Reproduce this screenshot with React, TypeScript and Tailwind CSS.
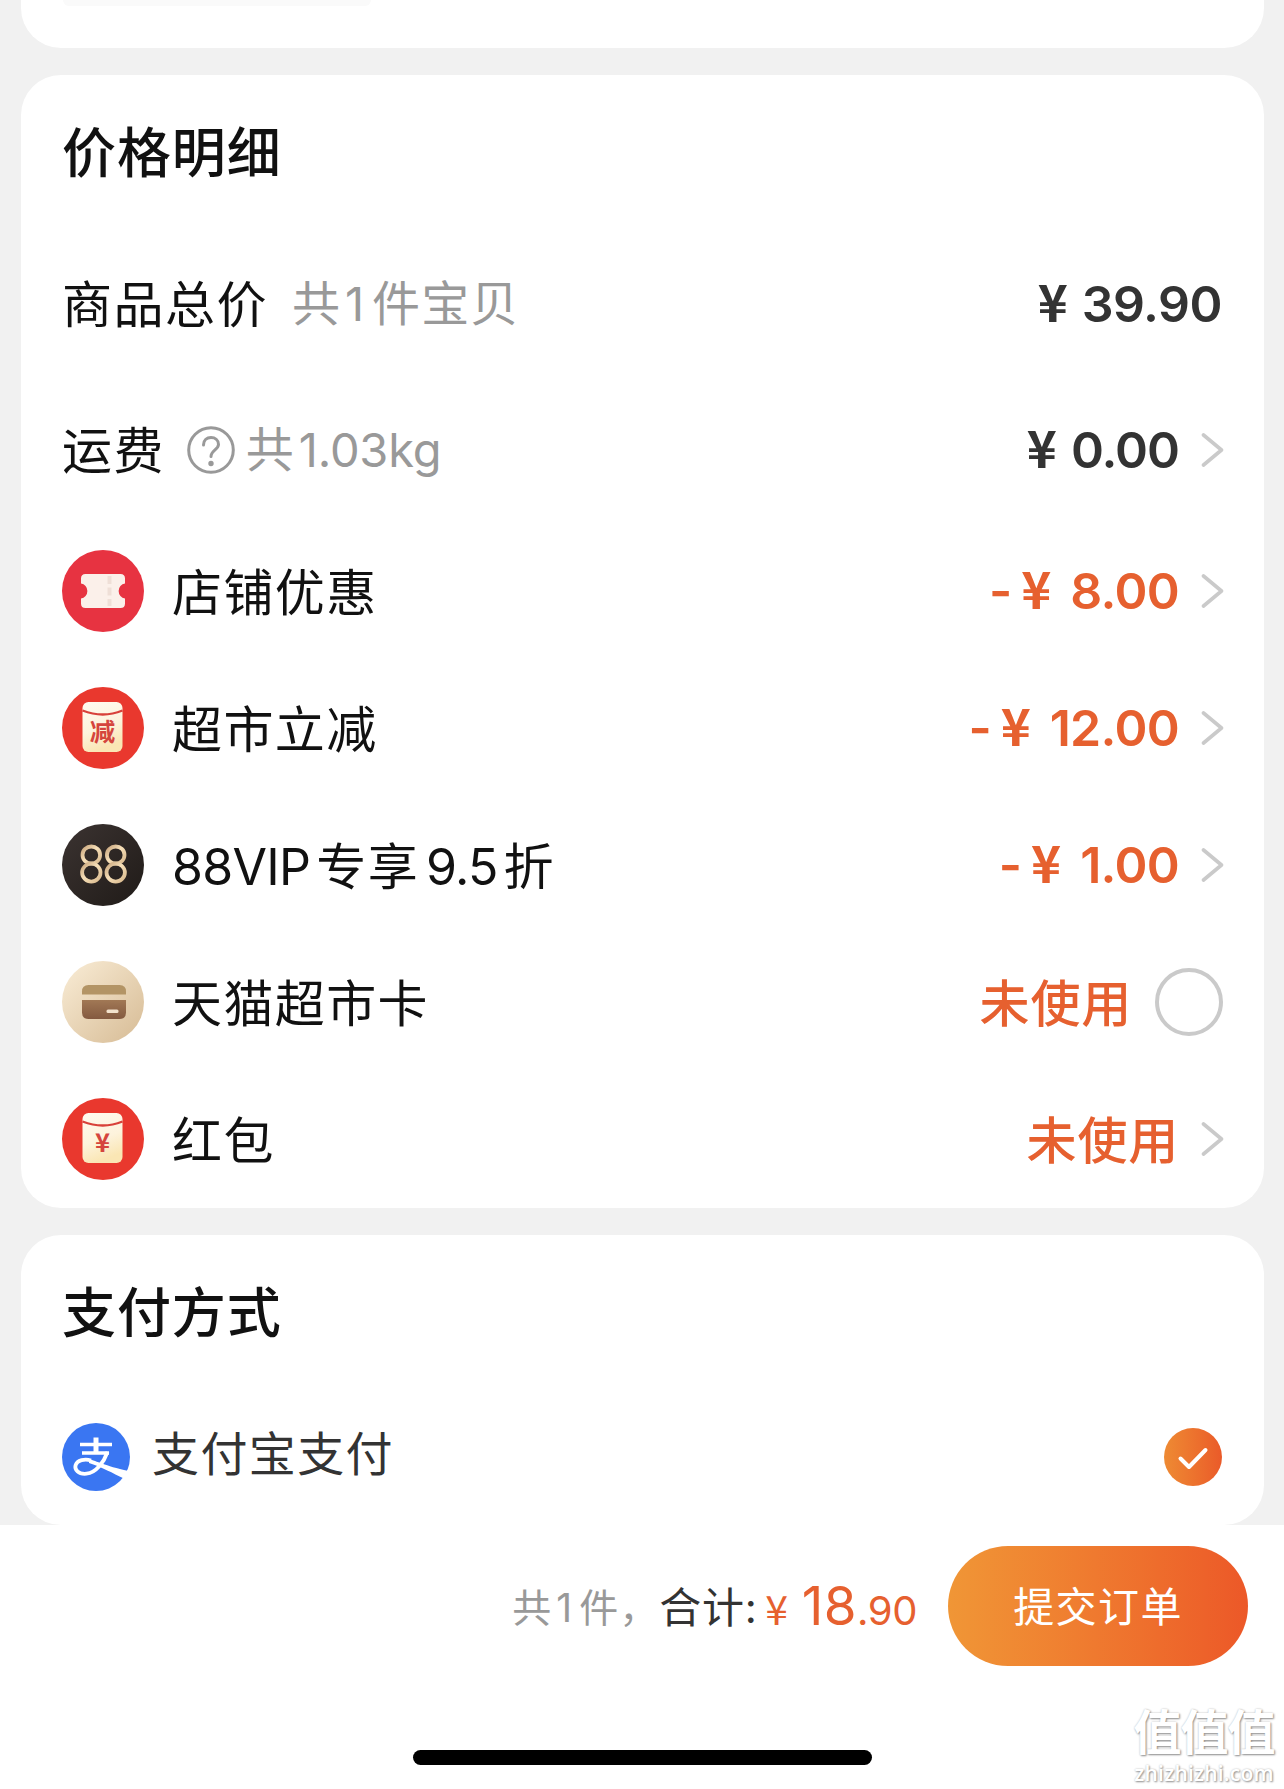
import type { ReactNode } from "react";

function Chevron() {
  return (
    <svg className="-mr-px ml-[21px] h-[40px] w-[24px] shrink-0" viewBox="0 0 24 40" fill="none" stroke="#cacaca" strokeWidth="3.6" strokeLinecap="round" strokeLinejoin="round">
      <path d="M3.500 5 21.500 20 3.500 35" />
    </svg>
  );
}

function Envelope({ mark, id }: { mark: string; id: string }) {
  return (
    <svg className="size-[82px]" viewBox="0 0 82 82">
      <defs>
        <linearGradient id={id} x1="0" y1="0" x2="0.3" y2="1">
          <stop offset="0" stopColor="#fffaf0" />
          <stop offset="0.6" stopColor="#fdf3dc" />
          <stop offset="1" stopColor="#fae6b4" />
        </linearGradient>
      </defs>
      <circle cx="41" cy="41" r="41" fill="#e9382e" />
      <rect x="20.500" y="15" width="40" height="50" rx="6" fill={`url(#${id})`} />
      <path d="M20.500 23.500Q41 31.500 60.500 23.500" fill="none" stroke="#d8413a" strokeWidth="2.400" />
      <text x="40.500" y="54" textAnchor="middle" fontSize="25.500" fontWeight="700" fill="#d5453d" fontFamily="'Noto Sans CJK SC', sans-serif">
        {mark}
      </text>
    </svg>
  );
}

function CouponIcon() {
  return (
    <svg className="size-[82px]" viewBox="0 0 82 82">
      <circle cx="41" cy="41" r="41" fill="#e73341" />
      <path
        d="M23.500 24H58.500Q63 24 63 28.500V33.500A7.600 7.600 0 0 0 63 48.500V53.500Q63 58 58.500 58H23.500Q19 58 19 53.500V48.500A7.600 7.600 0 0 0 19 33.500V28.500Q19 24 23.500 24Z"
        fill="#fbf0ea"
      />
      <path d="M47.500 26V56" stroke="#efdfd7" strokeWidth="4" strokeDasharray="8 3.500" />
    </svg>
  );
}

function VipIcon() {
  return (
    <svg className="size-[82px]" viewBox="0 0 82 82">
      <defs>
        <linearGradient id="vip-bg" x1="0" y1="0" x2="1" y2="1">
          <stop offset="0" stopColor="#3b3331" />
          <stop offset="1" stopColor="#201b18" />
        </linearGradient>
        <linearGradient id="vip-gold" x1="0" y1="0" x2="1" y2="1">
          <stop offset="0" stopColor="#c8a57c" />
          <stop offset="0.45" stopColor="#f6dfb8" />
          <stop offset="1" stopColor="#d8b88c" />
        </linearGradient>
      </defs>
      <circle cx="41" cy="41" r="41" fill="url(#vip-bg)" />
      <g fill="none" stroke="url(#vip-gold)" strokeWidth="3.800">
        <ellipse cx="29.300" cy="31" rx="8.800" ry="8.500" />
        <ellipse cx="29.300" cy="48.600" rx="9.200" ry="9" />
        <ellipse cx="53.700" cy="31" rx="8.800" ry="8.500" />
        <ellipse cx="53.700" cy="48.600" rx="9.200" ry="9" />
      </g>
    </svg>
  );
}

function CardIcon() {
  return (
    <svg className="size-[82px]" viewBox="0 0 82 82">
      <defs>
        <linearGradient id="card-bg" x1="0.1" y1="0.1" x2="0.9" y2="0.9">
          <stop offset="0" stopColor="#f6e8d0" />
          <stop offset="1" stopColor="#dac09b" />
        </linearGradient>
        <linearGradient id="card-body" x1="0" y1="0" x2="0" y2="1">
          <stop offset="0" stopColor="#a17855" />
          <stop offset="1" stopColor="#845a40" />
        </linearGradient>
      </defs>
      <circle cx="41" cy="41" r="41" fill="url(#card-bg)" />
      <path d="M20 33.500V30.500Q20 24 26.500 24H57.500Q64 24 64 30.500V33.500Z" fill="#b39465" />
      <path d="M20 39H64V51.500Q64 58 57.500 58H26.500Q20 58 20 51.500Z" fill="url(#card-body)" />
      <rect x="44.500" y="48.500" width="12" height="3.600" rx="1.500" fill="#f3e2cc" />
    </svg>
  );
}

function AlipayIcon() {
  return (
    <svg className="size-[68px] shrink-0" viewBox="0 0 68 68">
      <circle cx="34" cy="34" r="34" fill="#3a76f2" />
      <g fill="none" stroke="#fff">
        <path d="M18 21.500H50M20 30H47" strokeWidth="3.600" />
        <path d="M34 14.500V30" strokeWidth="5" />
        <path d="M45.500 29C42 39 34 50 24.500 50.700C16 51.500 12.500 46.500 13.500 42.500C15 37 23 35.500 29 37.500" strokeWidth="3.800" />
      </g>
      <path d="M27 36.200C35 38 42 42.500 66.500 48L62 55.500C50 50 41 44.500 27 40Z" fill="#fff" />
      <path d="M60.500 54.200 66 46.300 68.500 47V56H62Z" fill="#fff" />
    </svg>
  );
}

function DiscountRow({ icon, label, children }: { icon: ReactNode; label: ReactNode; children: ReactNode }) {
  return (
    <div className="flex h-[137px] items-center">
      {icon}
      <span className="mt-[4px] ml-[28px] text-[50px] tracking-[1.4px] text-[#111]">{label}</span>
      <div className="ml-auto flex items-center text-[50px] text-[#e6602f]">{children}</div>
    </div>
  );
}

function Yen() {
  return <span className="inline-block w-[32px] text-center font-['Noto_Sans_CJK_SC'] text-[51px] leading-none font-bold">¥</span>;
}

function Minus({ amount }: { amount: string }) {
  return (
    <span className="-mt-[4px] flex items-baseline font-semibold">
      <span>-</span>
      <span className="ml-[8px]"><Yen /></span>
      <span className="ml-[18px] tracking-[-0.7px]">{amount}</span>
    </span>
  );
}

export default function App() {
  return (
    <div className="relative flex h-[1789px] w-[1284px] flex-col overflow-hidden bg-[#f1f1f1] font-['Inter','Noto_Sans_CJK_SC',sans-serif] leading-none whitespace-nowrap">
      <section className="mr-[20px] ml-[21px] h-[48px] rounded-b-[40px] bg-white px-[42px]">
        <div className="h-[6px] w-[308px] rounded-b-[10px] bg-[#fafafa]" />
      </section>

      <section className="mt-[27px] mr-[20px] ml-[21px] h-[1133px] rounded-[40px] bg-white pr-[41px] pl-[41px]">
        <h2 className="flex h-[152px] items-center pt-[5px] text-[54px] font-medium tracking-[0.9px] text-[#111]">价格明细</h2>
        <div className="flex h-[154px] items-center">
          <span className="mt-[2px] text-[50px] tracking-[1.5px] text-[#111]">商品总价</span>
          <span className="ml-[24px] text-[48px] tracking-[1.1px] text-[#999]">共<span className="ml-[4px] inline-block w-[27px] text-[47px]">1</span>件宝贝</span>
          <span className="-mt-[5px] ml-auto flex items-baseline text-[50px] font-semibold text-[#333]">
            <Yen />
            <span className="mr-px ml-[13px] tracking-[-0.5px]">39.90</span>
          </span>
        </div>
        <div className="flex h-[137px] items-center">
          <span className="mt-[2px] text-[50px] tracking-[1.4px] text-[#111]">运费</span>
          <svg className="ml-[22px] size-[48px]" viewBox="0 0 48 48" fill="none" stroke="#999" strokeWidth="3" strokeLinecap="round">
            <circle cx="24" cy="24" r="22.300" />
            <path d="M16.500 19C16.500 14 20 11.500 24 11.500S31.500 14 31.500 18.500C31.500 23.500 24 24.500 24 30.500" />
            <circle cx="24" cy="37.500" r="1.200" fill="#999" />
          </svg>
          <span className="ml-[11px] text-[48px] text-[#999]">共<span className="ml-[5px] text-[47px] tracking-[-0.2px]">1.03kg</span></span>
          <div className="ml-auto flex items-center text-[50px] text-[#333]">
            <span className="-mt-[4px] flex items-baseline font-semibold">
              <Yen />
              <span className="ml-[13px] tracking-[-1px]">0.00</span>
            </span>
            <Chevron />
          </div>
        </div>

        <div className="mt-[4px]">
          <DiscountRow icon={<CouponIcon />} label="店铺优惠">
            <Minus amount="8.00" />
            <Chevron />
          </DiscountRow>
          <DiscountRow icon={<Envelope mark="减" id="env-cut" />} label="超市立减">
            <Minus amount="12.00" />
            <Chevron />
          </DiscountRow>
          <DiscountRow
            icon={<VipIcon />}
            label={<><span className="tracking-[-0.7px]">88VIP</span><span className="mr-[7px] ml-[6px]">专享</span><span className="tracking-[-0.8px]">9.5</span><span className="ml-[6px]">折</span></>}
          >
            <Minus amount="1.00" />
            <Chevron />
          </DiscountRow>
          <DiscountRow icon={<CardIcon />} label="天猫超市卡">
            <span className="mt-[4px] font-medium tracking-[0.8px]">未使用</span>
            <span className="ml-[23px] size-[68px] rounded-full border-[4px] border-[#cacaca]" />
          </DiscountRow>
          <DiscountRow icon={<Envelope mark="¥" id="env-yen" />} label="红包">
            <span className="mt-[4px] font-medium tracking-[0.8px]">未使用</span>
            <Chevron />
          </DiscountRow>
        </div>
      </section>

      <section className="mt-[27px] mr-[20px] ml-[21px] h-[290px] rounded-[40px] bg-white pr-[42px] pl-[41px]">
        <h2 className="flex h-[156px] items-center pt-[2px] text-[54px] font-medium tracking-[0.9px] text-[#111]">支付方式</h2>
        <div className="flex h-[132px] items-center">
          <AlipayIcon />
          <span className="-mt-[8px] ml-[22px] text-[47px] tracking-[1.4px] text-[#333]">支付宝支付</span>
          <span className="ml-auto flex size-[58px] items-center justify-center rounded-full bg-linear-to-r from-[#ee8a33] to-[#ea5a29]">
            <svg className="size-[58px]" viewBox="0 0 58 58" fill="none" stroke="#fff" strokeWidth="4" strokeLinecap="round" strokeLinejoin="round">
              <path d="M16.500 30.500 25 39 41.500 22" />
            </svg>
          </span>
        </div>
      </section>

      <footer className="flex flex-1 flex-col bg-white">
        <div className="mt-[21px] flex h-[120px] items-center justify-end pr-[36px]">
          <div className="flex items-baseline">
            <span className="mt-[2px] self-center text-[39px] tracking-[1px] text-[#999]">共<span className="ml-[4px] inline-block w-[23px]">1</span>件，</span>
            <span className="mt-[3px] self-center text-[42px] tracking-[0.8px] text-[#333]">合计:</span>
            <span className="ml-[6px] w-[26px] text-center font-['Noto_Sans_CJK_SC'] text-[41px] leading-none text-[#e6602f]">¥</span>
            <span className="ml-[12px] text-[53px] tracking-[0.4px] text-[#e6602f]">18</span>
            <span className="text-[40px] tracking-[-0.4px] text-[#e6602f]">.90</span>
          </div>
          <button className="ml-[31px] h-[120px] w-[300px] rounded-full bg-linear-to-r from-[#f09636] to-[#ec5828] pt-[2px] text-[41px] tracking-[1.4px] text-white">提交订单</button>
        </div>
        <div className="mx-auto mt-[84px] h-[15px] w-[459px] rounded-full bg-black" />
      </footer>

      <div className="absolute right-[9px] bottom-[5px] flex w-[142px] flex-col items-center text-white [text-shadow:1px_1px_2px_#8f8f8f,0_0_2px_#c4c4c4]">
        <span className="text-[48px] font-bold tracking-[-1px]">值值值</span>
        <span className="mt-[6px] font-['Open_Sans'] text-[21px] font-semibold tracking-[0.2px]">zhizhizhi.com</span>
      </div>
    </div>
  );
}
